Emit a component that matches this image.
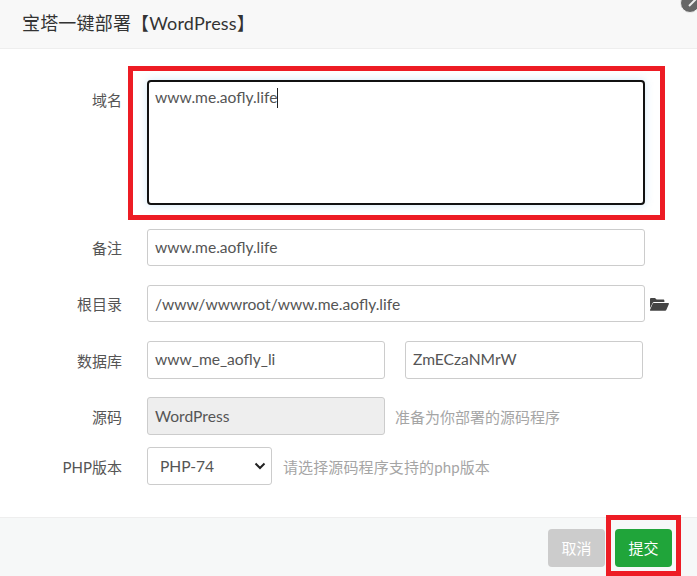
<style>
  :global(body) { margin: 0; background: #fff; }
  .dialog { position: relative; width: 697px; height: 576px; overflow: hidden; display: flex; flex-direction: column; font-family: Lato, "Noto Sans CJK SC", sans-serif; color: #555; font-size: 15px; }
  .head { height: 49px; box-sizing: border-box; flex: none; background: #f8f8f8; border-bottom: 1px solid #eee; padding-left: 22px; line-height: 46px; font-size: 18px; letter-spacing: 0.18px; color: #333; }
  .form { flex: 1; padding-top: 31px; display: flex; flex-direction: column; }
  .row { display: flex; align-items: center; }
  .r-area { align-items: flex-start; height: 125px; margin-bottom: 24px; }
  .r-note { height: 37px; margin-bottom: 19px; }
  .r-root { height: 37px; margin-bottom: 19px; }
  .r-db { height: 38px; margin-bottom: 18px; }
  .r-src { height: 38px; margin-bottom: 12px; }
  .r-php { height: 38px; }
  .label { width: 122px; flex: none; margin-right: 25px; text-align: right; font-size: 15px; color: #555; }
  .r-area .label { padding-top: 9px; }
  .field { box-sizing: border-box; height: 100%; border: 1px solid #ccc; border-radius: 3px; padding: 0 7px; font-size: 15.6px; line-height: 35px; color: #555; background: #fff; white-space: nowrap; }
  .r-root .field { line-height: 37px; }
  .r-src .field { line-height: 37px; }
  .w498 { width: 498px; }
  .w238 { width: 238px; }
  .area { width: 498px; height: 125px; box-sizing: border-box; border: 2px solid #111; border-radius: 4px; padding: 4px 6px; font-size: 15.6px; line-height: 22px; color: #555; box-shadow: 0 0 8px rgba(102, 175, 233, 0.3); }
  .caret { display: inline-block; width: 1px; height: 20px; background: #222; vertical-align: -5px; }
  .folder { width: 20px; height: 16px; margin-left: 4px; flex: none; }
  .gap { margin-left: 20px; }
  .off { background: #eee; }
  .hint { color: #a5a5a5; font-size: 15px; margin-left: 10px; }
  .r-php .hint { margin-left: 11px; letter-spacing: 0.12px; }
  .select { width: 125px; display: flex; align-items: center; justify-content: space-between; padding-right: 5px; padding-left: 12px; }
  .foot { height: 59px; flex: none; box-sizing: border-box; background: #f6f8f8; border-top: 1px solid #eee; display: flex; justify-content: flex-end; align-items: flex-start; gap: 10px; padding: 11px 25px 0 0; }
  .btn { width: 57px; height: 38px; border-radius: 4px; color: #fff; font-size: 15px; text-align: center; line-height: 38px; }
  .cancel { background: #ccc; }
  .submit { background: #20a53a; }
  .mark { position: absolute; box-sizing: border-box; border: 5px solid #ed1c24; }
  .mark-a { left: 128px; top: 66px; width: 537px; height: 154px; }
  .mark-b { left: 606px; top: 515px; width: 75px; height: 61px; }
  .close { position: absolute; left: 680px; top: -7px; width: 20px; height: 20px; }
</style>

<div class="dialog">
  <div class="head">宝塔一键部署【WordPress】</div>
  <div class="form">
    <div class="row r-area">
      <div class="label">域名</div>
      <div class="area">www.me.aofly.life<span class="caret"></span></div>
    </div>
    <div class="row r-note">
      <div class="label">备注</div>
      <div class="field w498">www.me.aofly.life</div>
    </div>
    <div class="row r-root">
      <div class="label">根目录</div>
      <div class="field w498">/www/wwwroot/www.me.aofly.life</div>
      <svg class="folder" viewBox="0 0 20 16" aria-hidden="true"><path fill="#444" d="M1 3.2C1 2.5 1.5 2 2.2 2H6l1.6 1.6h6.6c.7 0 1.2.5 1.2 1.2V6H5.2c-.7 0-1.3.4-1.6 1L1 12.2z"/><path fill="#444" d="M4.6 7h14.6c.6 0 .9.5.7 1l-2.6 6c-.2.4-.6.7-1.1.7H1.4c-.4 0-.6-.4-.4-.8l2.6-6.1c.2-.5.6-.8 1-.8z"/></svg>
    </div>
    <div class="row r-db">
      <div class="label">数据库</div>
      <div class="field w238">www_me_aofly_li</div>
      <div class="field w238 gap">ZmECzaNMrW</div>
    </div>
    <div class="row r-src">
      <div class="label">源码</div>
      <div class="field w238 off">WordPress</div>
      <div class="hint">准备为你部署的源码程序</div>
    </div>
    <div class="row r-php">
      <div class="label">PHP版本</div>
      <div class="field select"><span>PHP-74</span>
        <svg width="12" height="8" viewBox="0 0 12 8" aria-hidden="true"><path d="M1.5 1.5 6 6l4.5-4.5" fill="none" stroke="#222" stroke-width="2"/></svg>
      </div>
      <div class="hint">请选择源码程序支持的php版本</div>
    </div>
  </div>
  <div class="foot">
    <div class="btn cancel">取消</div>
    <div class="btn submit">提交</div>
  </div>
  <div class="mark mark-a"></div>
  <div class="mark mark-b"></div>
  <svg class="close" viewBox="0 0 20 20" aria-hidden="true"><circle cx="10" cy="10" r="9.5" fill="#666" stroke="#eee"/><path d="M9 13l8-8" stroke="#eee" stroke-width="2"/></svg>
</div>
